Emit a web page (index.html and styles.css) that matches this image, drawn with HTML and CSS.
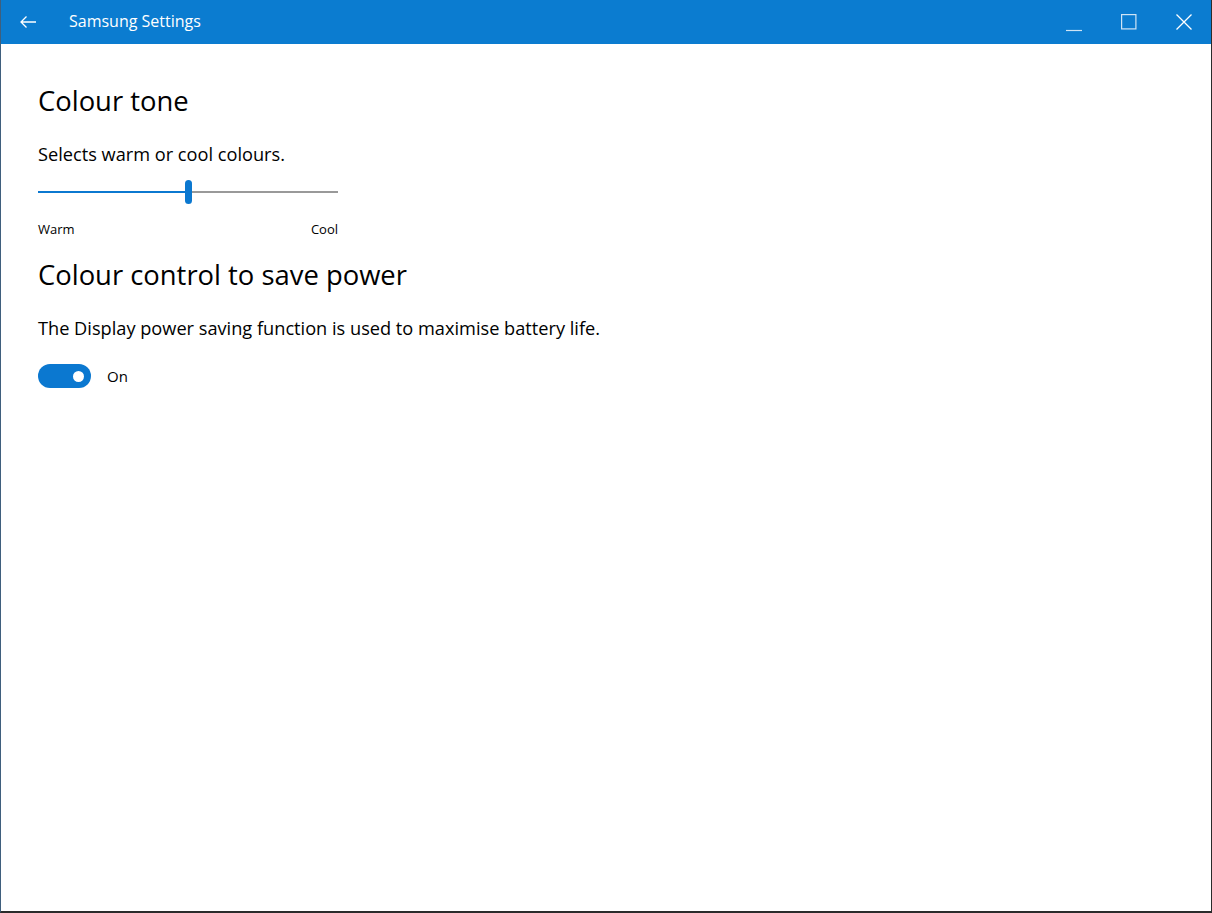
FILE: index.html
```html
<!DOCTYPE html>
<html lang="en">
<head>
    <meta charset="UTF-8">
    <title>Samsung Settings</title>
    <link rel="stylesheet" href="styles.css">
</head>
<body>
    <div class="window">
        <!-- Title bar -->
        <div class="title-bar">
            <div class="title-left">
                <span class="back-btn">
                    <svg width="18" height="14" viewBox="0 0 18 14"><path d="M17 7H2M7.5 1.5L2 7l5.5 5.5" fill="none" stroke="#fff" stroke-width="1.3"/></svg>
                </span>
                <span class="title-text">Samsung Settings</span>
            </div>
            <div class="window-controls">
                <span class="win-btn minimize">
                    <svg width="16" height="16" viewBox="0 0 16 16"><path d="M0 14.5h16" stroke="#cfe4f5" stroke-width="1.2"/></svg>
                </span>
                <span class="win-btn">
                    <svg width="16" height="16" viewBox="0 0 16 16"><rect x="0.6" y="0.6" width="14.3" height="14.3" fill="none" stroke="#cfe4f5" stroke-width="1.2"/></svg>
                </span>
                <span class="win-btn close">
                    <svg width="16" height="16" viewBox="0 0 16 16"><path d="M0.5 0.5l15 15M15.5 0.5l-15 15" stroke="#fff" stroke-width="1.3"/></svg>
                </span>
            </div>
        </div>

        <!-- Content -->
        <div class="content">
            <h2 class="section-title">Colour tone</h2>
            <p class="section-desc">Selects warm or cool colours.</p>
            <div class="slider">
                <div class="slider-track">
                    <div class="slider-fill"></div>
                    <div class="slider-thumb"></div>
                    <div class="slider-rest"></div>
                </div>
                <div class="slider-labels">
                    <span>Warm</span>
                    <span>Cool</span>
                </div>
            </div>

            <h2 class="section-title second">Colour control to save power</h2>
            <p class="section-desc second">The Display power saving function is used to maximise battery life.</p>
            <div class="toggle-row">
                <div class="toggle on"><div class="toggle-knob"></div></div>
                <span class="toggle-label">On</span>
            </div>
        </div>
    </div>
</body>
</html>
```

FILE: styles.css
```css
* {
    margin: 0;
    padding: 0;
    box-sizing: border-box;
}

body {
    font-family: "Open Sans", "Noto Sans", sans-serif;
    width: 1212px;
    height: 913px;
    overflow: hidden;
    background: #fff;
    color: #000;
}

.window {
    height: 913px;
    display: flex;
    flex-direction: column;
    border-left: 1px solid #3f5f7d;
    border-right: 1px solid #2b2b2b;
    border-bottom: 2px solid #2b2b2b;
}

.title-bar {
    height: 44px;
    background: #0b7cd0;
    color: #fff;
    display: flex;
    align-items: center;
    justify-content: space-between;
}

.title-left {
    display: flex;
    align-items: center;
}

.back-btn {
    width: 68px;
    padding-left: 18px;
    display: flex;
    align-items: center;
}

.title-text {
    font-size: 16px;
    line-height: 20px;
    padding-bottom: 3px;
}

.window-controls {
    display: flex;
    height: 100%;
}

.win-btn {
    width: 56px;
    display: flex;
    align-items: center;
    justify-content: center;
}

.win-btn.minimize {
    padding-top: 4px;
    justify-content: flex-end;
    padding-right: 19px;
}

.win-btn.close {
    width: 54px;
    justify-content: flex-start;
    padding-left: 19px;
}

.content {
    flex: 1;
    padding: 35px 37px 0;
}

.section-title {
    font-size: 27.4px;
    font-weight: 400;
    line-height: 44px;
}

.section-title.second {
    margin-top: 16px;
}

.section-desc {
    font-size: 18.2px;
    line-height: 24px;
    margin-top: 19px;
}

.section-desc.second {
    margin-top: 19px;
}

.slider {
    width: 300px;
    margin-top: 12px;
}

.slider-track {
    height: 28px;
    display: flex;
    align-items: center;
}

.slider-fill {
    width: 147px;
    height: 2px;
    background: #0b78d0;
}

.slider-thumb {
    width: 7px;
    height: 24px;
    border-radius: 4px;
    background: #0b78d0;
}

.slider-rest {
    flex: 1;
    height: 2px;
    background: #999;
}

.slider-labels {
    display: flex;
    justify-content: space-between;
    font-size: 13px;
    line-height: 16px;
    margin-top: 15px;
}

.toggle-row {
    display: flex;
    align-items: center;
    gap: 16px;
    margin-top: 24px;
}

.toggle {
    width: 53px;
    height: 24px;
    border-radius: 12px;
    background: #0b78d0;
    display: flex;
    align-items: center;
    justify-content: flex-end;
    padding-right: 7px;
}

.toggle-knob {
    width: 11px;
    height: 11px;
    border-radius: 50%;
    background: #fff;
}

.toggle-label {
    font-size: 15px;
    line-height: 20px;
}
```
